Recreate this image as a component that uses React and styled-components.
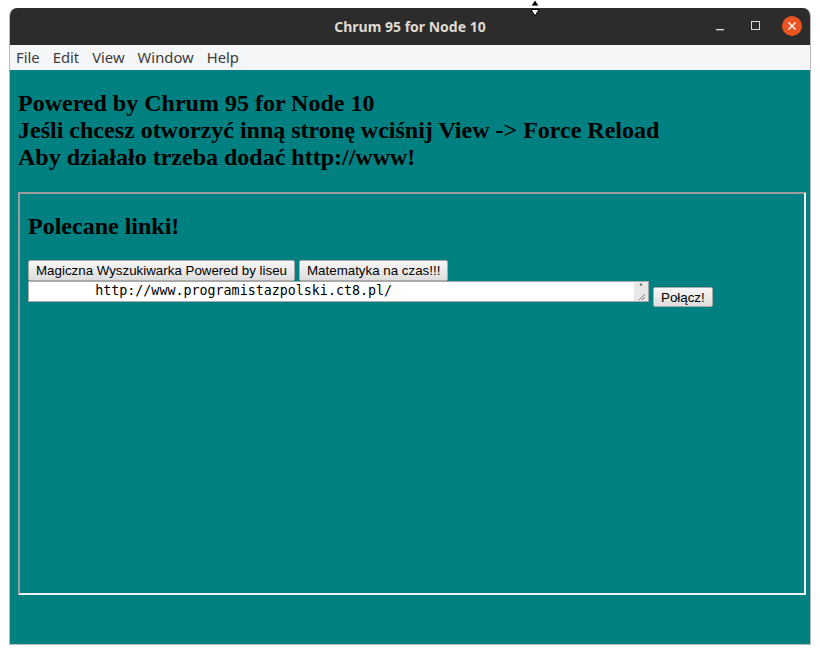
import React from 'react';
import styled, { createGlobalStyle } from 'styled-components';

const GlobalStyle = createGlobalStyle`
    html, body {
        margin: 0;
        padding: 0;
        background: #ffffff;
    }
`;

const Page = styled.div`
    position: relative;
    width: 820px;
    height: 655px;
    padding: 8px 0 0 9px;
    box-sizing: border-box;
    background: #ffffff;
`;

const Window = styled.div`
    width: 802px;
    height: 637px;
    display: flex;
    flex-direction: column;
    border: 1px solid #b9b9b9;
    border-top: none;
    border-radius: 8px 8px 0 0;
    box-sizing: border-box;
    overflow: hidden;
`;

const TitleBar = styled.div`
    height: 37px;
    flex: none;
    display: flex;
    align-items: center;
    justify-content: center;
    position: relative;
    background: #2c2c2c;
    color: #dfdbd2;
    font-family: "Noto Sans", "DejaVu Sans", sans-serif;
    font-weight: bold;
    font-size: 14px;
`;

const Controls = styled.div`
    position: absolute;
    right: 8px;
    top: 8px;
    display: flex;
    align-items: center;
    gap: 16px;
`;

const ControlButton = styled.div`
    width: 20px;
    height: 20px;
    display: flex;
    align-items: center;
    justify-content: center;
    border-radius: 50%;
    background: ${p => (p.$close ? '#e95420' : 'transparent')};
`;

const MenuBar = styled.div`
    height: 25px;
    flex: none;
    display: flex;
    align-items: center;
    gap: 13px;
    padding: 0 0 2px 6px;
    box-sizing: border-box;
    background: #f5f6f7;
    color: #3c3c3c;
    font-family: "Noto Sans", "DejaVu Sans", sans-serif;
    font-size: 14.8px;
`;

const Content = styled.div`
    flex: 1;
    background: #008080;
    padding: 20px 4px 0 8px;
    box-sizing: border-box;
`;

const Heading = styled.h2`
    margin: 0;
    font-family: "Liberation Serif", "Times New Roman", serif;
    font-weight: bold;
    font-size: 24px;
    line-height: 27px;
    color: #000000;
`;

const Intro = styled.div`
    margin-bottom: 21px;
`;

const Panel = styled.div`
    height: 403px;
    box-sizing: border-box;
    border: 2px solid;
    border-color: #9d9d9d #f0f0f0 #f0f0f0 #9d9d9d;
    padding: 19px 8px 0 8px;
`;

const Links = styled.div`
    margin-top: 20px;
    display: flex;
    flex-direction: column;
`;

const Row = styled.div`
    display: flex;
    align-items: flex-start;
    gap: 4px;
`;

const Button = styled.button`
    height: ${p => (p.$small ? '20px' : '21px')};
    margin-top: ${p => p.$offset || 0}px;
    padding: 0 7px;
    font-family: "Liberation Sans", Arial, sans-serif;
    font-size: 13.33px;
    color: #000000;
    background: linear-gradient(#f6f6f6, #dedede);
    border: 1px solid #a9a9a9;
    border-radius: 2px;
`;

const AddressBox = styled.div`
    display: flex;
    width: 621px;
    height: 21px;
`;

const Address = styled.textarea`
    flex: 1;
    height: 21px;
    box-sizing: border-box;
    padding: 1px 2px;
    margin: 0;
    font-family: "DejaVu Sans Mono", monospace;
    font-size: 13.33px;
    line-height: 16px;
    border: 1px solid #a9a9a9;
    border-right: none;
    background: #ffffff;
    color: #000000;
    overflow: hidden;
    white-space: pre;
    resize: none;
`;

const ScrollTrack = styled.div`
    width: 15px;
    height: 21px;
    box-sizing: border-box;
    border: 1px solid #a9a9a9;
    border-left: none;
    background: #e8e8e8;
    display: flex;
    flex-direction: column;
    justify-content: space-between;
    align-items: center;
`;

const Cursor = styled.svg`
    position: absolute;
    left: 529px;
    top: 0;
`;

function App() {
    return (
        <Page>
            <GlobalStyle />
            <Window>
                <TitleBar>
                    Chrum 95 for Node 10
                    <Controls>
                        <ControlButton>
                            <svg width="10" height="10" viewBox="0 0 10 10">
                                <rect x="1" y="8" width="8" height="1.3" fill="#dfdbd2" />
                            </svg>
                        </ControlButton>
                        <ControlButton>
                            <svg width="10" height="10" viewBox="0 0 10 10">
                                <rect x="0.5" y="0.5" width="8" height="8" fill="none" stroke="#dfdbd2" strokeWidth="1" />
                            </svg>
                        </ControlButton>
                        <ControlButton $close>
                            <svg width="10" height="10" viewBox="0 0 10 10">
                                <path d="M1.5 1.5 L8.5 8.5 M8.5 1.5 L1.5 8.5" stroke="#ffffff" strokeWidth="1.4" />
                            </svg>
                        </ControlButton>
                    </Controls>
                </TitleBar>
                <MenuBar>
                    <span>File</span>
                    <span>Edit</span>
                    <span>View</span>
                    <span>Window</span>
                    <span>Help</span>
                </MenuBar>
                <Content>
                    <Intro>
                        <Heading>Powered by Chrum 95 for Node 10</Heading>
                        <Heading>Jeśli chcesz otworzyć inną stronę wciśnij View -&gt; Force Reload</Heading>
                        <Heading>Aby działało trzeba dodać http://www!</Heading>
                    </Intro>
                    <Panel>
                        <Heading>Polecane linki!</Heading>
                        <Links>
                            <Row>
                                <Button>Magiczna Wyszukiwarka Powered by liseu</Button>
                                <Button>Matematyka na czas!!!</Button>
                            </Row>
                            <Row>
                                <AddressBox>
                                    <Address
                                        readOnly
                                        value={'        http://www.programistazpolski.ct8.pl/'}
                                    />
                                    <ScrollTrack>
                                        <svg width="6" height="5" viewBox="0 0 6 5">
                                            <path d="M3 1 L4.5 3.5 L1.5 3.5 Z" fill="#505050" />
                                        </svg>
                                        <svg width="10" height="10" viewBox="0 0 10 10">
                                            <path d="M9 3 L3 9 M9 6 L6 9" stroke="#777777" strokeWidth="1" />
                                        </svg>
                                    </ScrollTrack>
                                </AddressBox>
                                <Button $small $offset={6}>Połącz!</Button>
                            </Row>
                        </Links>
                    </Panel>
                </Content>
            </Window>
            <Cursor width="12" height="19" viewBox="0 0 12 19">
                <path d="M6 0 L10 6 L2 6 Z" fill="#000000" stroke="#ffffff" strokeWidth="0.8" />
                <path d="M2 9.5 L10 9.5 L6 16 Z" fill="#ffffff" stroke="#000000" strokeWidth="1" />
            </Cursor>
        </Page>
    );
}

export default App;
